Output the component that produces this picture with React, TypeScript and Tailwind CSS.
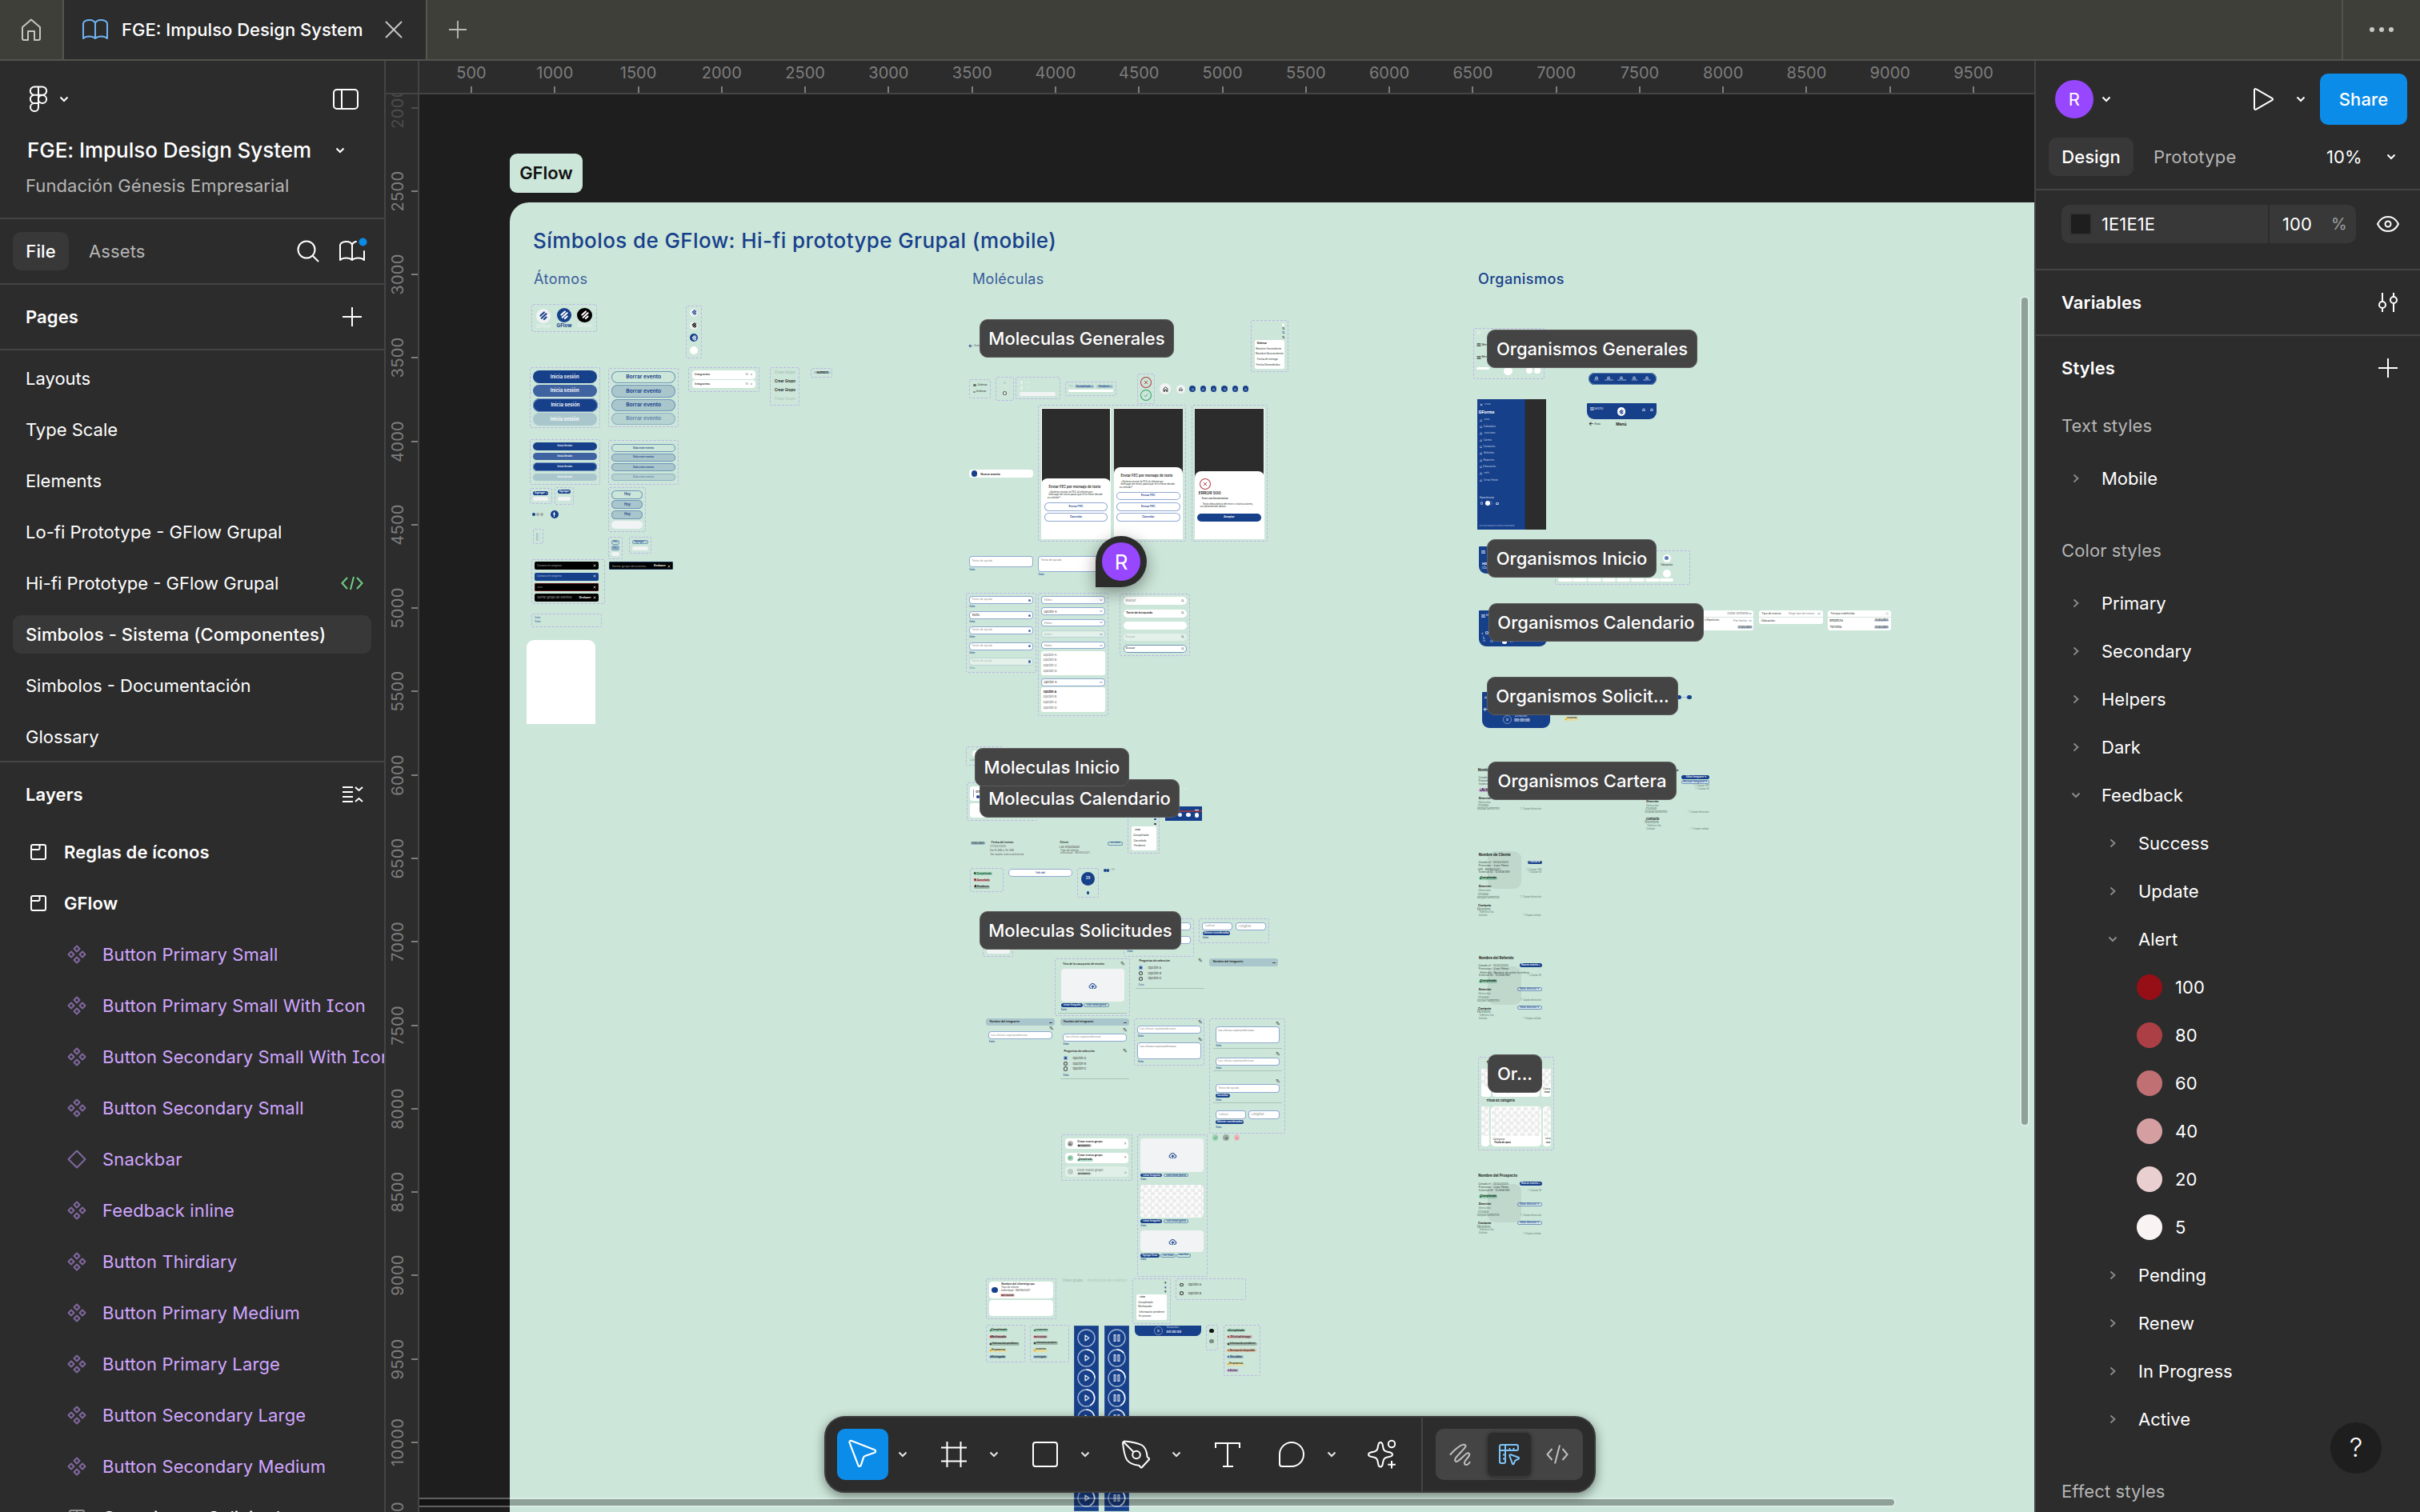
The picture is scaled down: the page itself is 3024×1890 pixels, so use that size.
import React from "react";

/* ---------- canvas miniatures ---------- */

type Item =
  | { k: "d"; x1: number; y1: number; x2: number; y2: number }
  | { k: "b"; x1: number; y1: number; x2: number; y2: number; f: string; r: number; s?: string }
  | { k: "c"; x: number; y: number; r: number; f: string; s?: string }
  | { k: "t"; x1: number; y: number; x2: number; v: string; f: string; w: number }
  | { k: "n"; x: number; y: number; w: number; h: number; n: React.ReactNode };

type Board = { ox: number; oy: number; sx: number; sy: number; items: Item[] };

const d = (x1: number, y1: number, x2: number, y2: number): Item => ({ k: "d", x1, y1, x2, y2 });
const b = (x1: number, y1: number, x2: number, y2: number, f: string, r = 0, s?: string): Item => ({ k: "b", x1, y1, x2, y2, f, r, s });
const c = (x: number, y: number, r: number, f: string, s?: string): Item => ({ k: "c", x, y, r, f, s });
const t = (x1: number, y: number, x2: number, v: string, f = "#3d4b45", w = 500): Item => ({ k: "t", x1, y, x2, v, f, w });
const n = (x: number, y: number, w: number, h: number, node: React.ReactNode): Item => ({ k: "n", x, y, w, h, n: node });

const BLUE = "#17408b";
const MID = "#3f63a1";
const PALE = "#a9c6cc";
const PALE2 = "#b6d2d1";
const OUT = "#6f97b8";
const LINE = "#8fa9cf";
const OFF = "#f1f3f4";
const GREY = "#8b8f8d";
const FAINT = "#e2f1e9";
const INK = "#1c2320";
const DARK = "#2c2c2c";
const RULE = "#a9c3b8";
const CHECKER = "repeating-conic-gradient(#ececec 0% 25%, #fbfbfb 0% 50%) 0 0 / 9px 9px";

function Mark({ fg }: { fg: string }) {
  return (
    <svg viewBox="0 0 20 20" className="h-full w-full" fill="none" stroke={fg} strokeWidth="2.4" strokeLinecap="round">
      <path d="M6 9.500l5-4.500M7.500 13l6.500-6M11 14.500l3-2.800" />
    </svg>
  );
}
function Cloud() {
  return (
    <svg viewBox="0 0 24 18" className="h-full w-full" fill="none" stroke="#17408b" strokeWidth="2.200" strokeLinecap="round" strokeLinejoin="round">
      <path d="M8 15H6a4 4 0 0 1-.6-7.900A6.500 6.500 0 0 1 18 7.200 4 4 0 0 1 18.500 15H16M12 16V8.500M9 11l3-3 3 3" />
    </svg>
  );
}
function Cross({ fg }: { fg: string }) {
  return (
    <svg viewBox="0 0 10 10" className="h-full w-full" fill="none" stroke={fg} strokeWidth="1.500">
      <path d="M1.500 1.500l7 7M8.500 1.500l-7 7" />
    </svg>
  );
}
function Tick({ fg }: { fg: string }) {
  return (
    <svg viewBox="0 0 10 10" className="h-full w-full" fill="none" stroke={fg} strokeWidth="1.500">
      <path d="M1.500 5.500l2.500 2.500 4.500-5.500" />
    </svg>
  );
}
function Vee({ fg, up }: { fg: string; up?: boolean }) {
  return (
    <svg viewBox="0 0 10 10" className="h-full w-full" fill="none" stroke={fg} strokeWidth="2">
      <path d={up ? "M1 7l4-4 4 4" : "M1 3l4 4 4-4"} />
    </svg>
  );
}
function Lens({ fg }: { fg: string }) {
  return (
    <svg viewBox="0 0 10 10" className="h-full w-full" fill="none" stroke={fg} strokeWidth="1.500">
      <circle cx="4" cy="4" r="2.800" />
      <path d="M6 6l3 3" />
    </svg>
  );
}
function Bars({ fg }: { fg: string }) {
  return (
    <svg viewBox="0 0 12 10" className="h-full w-full" fill="none" stroke={fg} strokeWidth="2">
      <path d="M0 1.500h12M0 5h12M0 8.500h12" />
    </svg>
  );
}
function House({ fg }: { fg: string }) {
  return (
    <svg viewBox="0 0 10 10" className="h-full w-full" fill="none" stroke={fg} strokeWidth="1.400">
      <path d="M1.500 9V4L5 1l3.500 3v5h-2V6h-3v3z" />
    </svg>
  );
}
function Play({ p }: { p: number }) {
  return (
    <svg viewBox="0 0 24 24" className="h-full w-full" fill="none">
      <circle cx="12" cy="12" r="11" stroke="#9fb3d3" strokeWidth="1.500" />
      <path d={p === 0 ? "M12 1h0" : p === 1 ? "M12 1a11 11 0 0 1 9 4.500" : p === 2 ? "M12 1a11 11 0 0 1 11 11" : "M12 1a11 11 0 0 1 5 20.500"} stroke="#fff" strokeWidth="1.600" />
      <path d="M10.500 8.500v7l5-3.500z" stroke="#dfe6f2" strokeWidth="1.400" strokeLinejoin="round" />
    </svg>
  );
}
function Pause({ p }: { p: number }) {
  return (
    <svg viewBox="0 0 24 24" className="h-full w-full" fill="none">
      <circle cx="12" cy="12" r="11" stroke="#9fb3d3" strokeWidth="1.500" />
      <path d={p === 0 ? "M12 1h0" : p === 1 ? "M12 1a11 11 0 0 1 9 4.500" : p === 2 ? "M12 1a11 11 0 0 1 11 11" : "M12 1a11 11 0 0 1 5 20.500"} stroke="#fff" strokeWidth="1.600" />
      <path d="M8.500 8v8h2V8zM13.500 8v8h2V8z" stroke="#cdd8ea" strokeWidth="1.200" />
    </svg>
  );
}

function pill(x1: number, y1: number, x2: number, y2: number, f: string, label: string, fg: string, tx1: number, tx2: number, s?: string, w = 600): Item[] {
  return [b(x1, y1, x2, y2, f, 20, s), t(tx1, (y1 + y2) / 2, tx2, label, fg, w)];
}
function field(x1: number, y1: number, x2: number, y2: number, label: string, lx2: number, fg = GREY, s: string | undefined = LINE, f = "#fff"): Item[] {
  return [b(x1, y1, x2, y2, f, 4, s), t(x1 + 10, (y1 + y2) / 2, lx2, label, fg, 400)];
}
const exito = (x: number, y: number): Item => t(x, y, x + 23, "Éxito", BLUE, 600);

const atoms: Board = {
  ox: 620, oy: 180, sx: 3, sy: 2.119,
  items: [
    d(132, 424, 377, 499),
    c(177, 455, 9.2, OFF), n(177, 455, 18, 18, <Mark fg={BLUE} />),
    c(255, 453, 9.2, BLUE), n(255, 453, 18, 18, <Mark fg="#fff" />),
    c(332, 453, 9.2, "#000"), n(332, 453, 18, 18, <Mark fg="#fff" />),
    t(152, 484, 202, "GFlow", FAINT, 700), t(230, 482, 280, "GFlow", BLUE, 700), t(307, 482, 356, "GFlow", FAINT, 700),
    d(711, 429, 770, 567),
    c(741, 447, 5, OFF), n(741, 447, 11, 11, <Mark fg={BLUE} />),
    c(741, 480, 5, OFF), n(741, 480, 11, 11, <Mark fg="#000" />),
    c(741, 513, 5, BLUE), n(741, 513, 11, 11, <Mark fg="#fff" />),
    c(741, 546, 5, "#fff"),
    d(127, 591, 389, 753),
    ...pill(138, 600, 377, 633, BLUE, "Inicia sesión", "#fff", 194, 320),
    ...pill(138, 637, 377, 669, MID, "Inicia sesión", "#fff", 194, 320),
    ...pill(139, 674, 380, 709, BLUE, "Inicia sesión", "#fff", 196, 323, "#6f8fbd"),
    ...pill(138, 713, 377, 745, PALE, "Inicia sesión", "#fff", 194, 320),
    d(421, 594, 683, 751),
    ...pill(432, 602, 672, 634, "transparent", "Borrar evento", BLUE, 482, 623, OUT),
    ...pill(432, 638, 672, 671, PALE, "Borrar evento", BLUE, 482, 623, OUT),
    ...pill(432, 675, 672, 707, PALE, "Borrar evento", BLUE, 482, 623, OUT),
    ...pill(432, 711, 672, 743, PALE2, "Borrar evento", "#5f86ab", 482, 623, "#8fb3c2"),
    d(721, 592, 986, 656),
    b(734, 600, 972, 622, "#fff", 4), t(743, 611, 803, "Integrantes", INK), t(934, 611, 945, "10", GREY), t(953, 611, 960, "›", INK),
    b(734, 626, 972, 647, "#fff", 4), t(743, 637, 803, "Integrantes", INK), t(934, 637, 945, "10", GREY), t(953, 637, 960, "›", INK),
    d(1027, 592, 1138, 692),
    t(1044, 607, 1122, "Crear Grupo", "#a9c2b5", 600), t(1044, 630, 1122, "Crear Grupo", "#111", 600),
    t(1044, 653, 1122, "Crear Grupo", "#111", 600), t(1044, 677, 1122, "Crear Grupo", "#b2cabd", 600),
    d(1180, 594, 1259, 618), ...pill(1191, 602, 1253, 609, PALE, "Nombre", INK, 1205, 1242),
    d(127, 782, 389, 903),
    ...pill(138, 791, 377, 811, BLUE, "Inicia Sesión", "#fff", 225, 290),
    ...pill(138, 817, 377, 837, MID, "Inicia Sesión", "#fff", 225, 290),
    ...pill(138, 843, 377, 867, BLUE, "Inicia Sesión", "#fff", 225, 290, "#6f8fbd"),
    ...pill(138, 873, 377, 893, PALE, "Inicia Sesión", "#fff", 225, 290),
    d(421, 785, 683, 902),
    ...pill(432, 795, 672, 816, "transparent", "Solo este evento", BLUE, 510, 594, OUT),
    ...pill(432, 820, 672, 841, PALE, "Solo este evento", BLUE, 510, 594, OUT),
    ...pill(432, 846, 672, 867, PALE, "Solo este evento", BLUE, 510, 594, OUT),
    ...pill(432, 872, 672, 893, PALE2, "Solo este evento", "#5f86ab", 510, 594, "#8fb3c2"),
    d(127, 911, 209, 954), ...pill(138, 920, 196, 931, BLUE, "Agregar +", "#fff", 144, 192), b(138, 935, 196, 946, OFF, 20),
    d(220, 908, 290, 955), ...pill(231, 915, 278, 927, BLUE, "Agregar", "#fff", 237, 273), b(231, 935, 278, 946, OFF, 20),
    c(140, 981, 2, BLUE), c(155, 981, 2, "#a3a8a5"), c(170, 981, 2, "#a3a8a5"),
    c(218, 981, 5, BLUE), b(213, 980, 223, 982, "#fff"), b(217, 975, 219, 987, "#fff"),
    d(421, 909, 562, 1028),
    ...pill(432, 918, 550, 940, "transparent", "Hoy", BLUE, 482, 502, OUT),
    ...pill(432, 944, 550, 966, PALE, "Hoy", BLUE, 482, 502, OUT),
    ...pill(432, 970, 550, 993, PALE, "Hoy", BLUE, 482, 502, OUT),
    b(432, 998, 550, 1019, OFF, 20),
    d(138, 1020, 176, 1060), b(150, 1029, 155, 1051, PALE), b(158, 1029, 163, 1051, "#bdd7d2"),
    d(421, 1041, 473, 1099),
    ...pill(433, 1049, 461, 1061, "transparent", "Hoy", BLUE, 440, 454, OUT),
    ...pill(433, 1064, 461, 1076, PALE, "Hoy", BLUE, 440, 454, OUT), b(433, 1080, 461, 1091, OFF, 20),
    d(499, 1041, 581, 1084), ...pill(510, 1049, 570, 1060, "transparent", "Agregar +", BLUE, 517, 564, OUT), b(510, 1065, 570, 1076, OFF, 20),
    d(132, 1099, 407, 1219),
    b(144, 1106, 383, 1127, "#000", 2), t(154, 1117, 245, "Contacto en progreso", "#999"), n(369, 1117, 4, 4, <Cross fg="#fff" />),
    b(144, 1135, 383, 1156, BLUE, 2), t(154, 1145, 245, "Contacto en progreso", "#9fb4dc"), n(369, 1145, 4, 4, <Cross fg="#fff" />),
    b(144, 1163, 383, 1184, "#000", 2, "#5a1015"), t(154, 1174, 174, "Error", "#999"), n(369, 1174, 4, 4, <Cross fg="#fff" />),
    b(144, 1191, 383, 1212, "#000", 2), t(154, 1202, 284, "Borrar grupo de eventos", "#999"), t(313, 1202, 354, "Deshacer", "#fff", 700), n(369, 1202, 4, 4, <Cross fg="#fff" />),
    b(424, 1107, 662, 1128, "#000", 2, "#23395f"), t(434, 1118, 563, "Borrar grupo de eventos", "#888"), t(593, 1118, 634, "Deshacer", "#fff", 700), n(648, 1118, 4, 4, <Cross fg="#fff" />),
    d(132, 1243, 395, 1279), t(144, 1255, 167, "Éxito", "#3f63a1", 600), t(144, 1267, 168, "Éxito", "#3f63a1", 600),
  ],
};

const optList = (x: number, ys: number[], firstBold: boolean): Item[] =>
  ys.map((y, i) => t(x, y, x + 48, "Opción " + "ABCD"[i], firstBold && i === 0 ? INK : "#555", firstBold && i === 0 ? 700 : 400));

const general: Board = {
  ox: 1200, oy: 380, sx: 3, sy: 2.904,
  items: [
    t(33, 152, 43, "←", BLUE, 700), t(51, 153, 73, "Atrás", "#667"),
    d(1090, 58, 1229, 248), b(1206, 70, 1216, 80, "#fff", 2), t(1208, 91, 1214, "⇅", INK), t(1208, 105, 1214, "⇅", BLUE), t(1208, 123, 1214, "⇅", INK),
    b(1103, 130, 1216, 235, "#fff", 2),
    t(1113, 144, 1148, "Ordenar", INK, 700), t(1113, 164, 1198, "Nombre Ascendente"), t(1113, 183, 1205, "Nombre Descendente"), t(1113, 202, 1189, "Fecha de entrega"), t(1113, 222, 1194, "Fecha Desembolso"),
    d(33, 273, 113, 342), n(55, 294, 4, 3, <Bars fg={INK} />), t(66, 294, 100, "Ordenar"), n(52, 318, 3, 2, <Bars fg={INK} />), t(60, 318, 96, "Ordenar"),
    d(132, 265, 200, 350), c(166, 286, 1.5, "#b8d0c5"), t(159, 299, 174, "Inicio", FAINT), c(166, 324, 2.5, "#fff", "#555"), t(159, 336, 174, "Inicio", FAINT),
    d(208, 265, 374, 345), b(225, 280, 234, 290, FAINT, 1), t(238, 285, 262, "Visita", FAINT), t(349, 285, 355, "›", FAINT), b(225, 300, 234, 310, FAINT, 1), t(238, 304, 262, "Visita", FAINT), t(349, 304, 355, "›", FAINT),
    b(222, 318, 357, 333, OFF, 2),
    d(393, 283, 584, 333), t(405, 300, 424, "Filtros", "#8ba89a"), ...pill(429, 294, 501, 306, PALE, "Completado ×", BLUE, 436, 496), ...pill(511, 294, 573, 306, PALE, "Pendiente ×", BLUE, 518, 567),
    b(405, 311, 573, 319, "#fff", 1),
    d(664, 254, 730, 362), c(697, 285, 7, "transparent", "#b03a43"), n(697, 285, 6, 6, <Cross fg="#b03a43" />), c(697, 330, 7, "transparent", "#35a06a"), n(697, 330, 6, 6, <Tick fg="#35a06a" />),
    c(769, 308, 7, OFF), n(769, 309, 7, 7, <House fg="#333" />), c(825, 308, 5.5, OFF), n(825, 308, 5, 5, <House fg="#333" />),
    ...[870, 910, 950, 990, 1030, 1070].flatMap((x): Item[] => [c(x, 308, 3.7, BLUE), n(x, 308, 3, 3, <House fg="#c6d3ea" />)]),
    d(292, 367, 847, 863),
    b(303, 378, 564, 853, "#fff"), b(305, 380, 562, 660, DARK), b(303, 632, 564, 853, "#fff", 8),
    b(575, 378, 835, 853, "#fff"), b(577, 380, 833, 620, DARK), b(575, 593, 835, 853, "#fff", 8),
    b(303, 800, 564, 853, "#fff"), b(575, 800, 835, 853, "#fff"),
    t(324, 664, 533, "Enviar FEC por mensaje de texto", INK, 600), t(324, 684, 505, "¿Quieres enviar la FEC al cliente por"), t(324, 694, 540, "mensaje de texto para que él lo llene desde"), t(324, 704, 377, "su celular?"),
    ...pill(315, 721, 552, 751, "#fff", "Enviar FEC", BLUE, 405, 461, LINE), ...pill(315, 759, 552, 789, "#fff", "Cancelar", BLUE, 411, 456, LINE),
    t(594, 625, 803, "Enviar FEC por mensaje de texto", INK, 600), t(594, 646, 770, "¿Quieres enviar la FEC al cliente por"), t(594, 656, 811, "mensaje de texto para que él lo llene desde"), t(594, 666, 648, "su celular?"),
    ...pill(585, 683, 824, 712, "#fff", "Enviar FEC", BLUE, 677, 732, LINE), ...pill(585, 721, 824, 751, "#fff", "Enviar FEC", BLUE, 677, 732, LINE), ...pill(585, 759, 824, 789, "#fff", "Cancelar", BLUE, 682, 727, LINE),
    d(867, 367, 1151, 863),
    b(879, 378, 1139, 853, "#fff"), b(879, 380, 1137, 640, DARK), b(879, 608, 1139, 853, "#fff", 8), b(879, 800, 1139, 853, "#fff"),
    c(917, 652, 7, "#fff", "#b03a43"), n(917, 652, 6, 6, <Cross fg="#b03a43" />),
    t(898, 688, 972, "ERROR 500", INK, 600), t(898, 706, 1011, "Error con los servicios", INK, 600), t(898, 728, 1107, "Texto descriptivo del error o instrucciones,"), t(898, 738, 998, "no obteniendo datos."),
    ...pill(888, 760, 1128, 790, BLUE, "Aceptar", "#fff", 987, 1028),
    b(33, 601, 272, 630, "#fff", 4), c(52, 616, 3.7, BLUE), t(77, 617, 148, "Nuevo evento", INK, 600),
    ...field(33, 916, 272, 954, "Texto de ayuda", 119), exito(33, 965),
    b(292, 916, 560, 974, "#fff", 4, LINE), t(302, 931, 378, "Texto de ayuda", GREY), exito(292, 983),
    d(22, 1047, 284, 1339),
    ...field(33, 1061, 272, 1089, "Texto de ayuda", 119), ...field(33, 1116, 272, 1145, "Texto", 72, INK), ...field(33, 1171, 272, 1200, "Texto de ayuda", 119), ...field(33, 1227, 272, 1256, "Texto de ayuda", 119), ...field(33, 1283, 272, 1312, "Texto de ayuda", 119, "#a9bdb3", "#b9d3d6", "#e3f1ea"),
    ...[1075, 1131, 1186, 1242, 1298].map((y): Item => c(259, y, 1.6, "#4a6cab")),
    exito(33, 1099), exito(33, 1155), exito(33, 1210), exito(33, 1266), t(33, 1322, 56, "Éxito", "#7296ad", 600),
    d(292, 1047, 554, 1497),
    ...field(304, 1061, 542, 1088, "Aldea", 342), ...field(304, 1102, 542, 1131, "Opción A", 360, INK), ...field(304, 1143, 542, 1171, "Aldea", 342),
    ...field(304, 1184, 542, 1212, "Aldea", 342, "#a9bdb3", "#b9d3d6", "#e3f1ea"), ...field(304, 1225, 542, 1253, "Aldea", 342),
    b(304, 1259, 542, 1347, "#fff", 3), ...optList(312, [1274, 1293, 1312, 1332], false),
    ...field(304, 1358, 542, 1387, "Opción A", 360, INK), b(304, 1392, 542, 1480, "#fff", 3), ...optList(312, [1407, 1426, 1446, 1465], true),
    ...[1075, 1116, 1157, 1198].map((y): Item => n(527, y, 4, 4, <Vee fg="#4a6cab" />)),
    ...[1240, 1373].map((y): Item => n(527, y, 4, 4, <Vee fg="#4a6cab" up />)),
    d(598, 1052, 862, 1279),
    b(611, 1064, 848, 1093, "#fff", 20), t(621, 1078, 656, "Buscar", GREY), b(611, 1108, 848, 1137, "#fff", 20), t(621, 1122, 720, "Texto de búsqueda", INK, 600), b(611, 1152, 848, 1181, "#fff", 20),
    b(611, 1196, 848, 1224, "#e3f1ea", 20), t(621, 1209, 654, "Buscar", "#a9bdb3"), b(611, 1238, 848, 1267, "#fff", 20, OUT), t(621, 1252, 654, "Buscar"),
    ...[1078, 1122, 1209, 1252].map((y): Item => n(833, y, 4, 4, <Lens fg="#666" />)),
  ],
};

const radios = (x: number, ys: number[]): Item[] =>
  ys.flatMap((y, i): Item[] => [c(x, y, 2.6, i === 0 ? BLUE : "transparent", i === 0 ? "#9fb8d6" : "#444"), t(x + 28, y, x + 75, "Opción " + "ABC"[i], "#555")]);
const ink = (x: number, y: number): Item => t(x - 4, y, x + 6, "✎", "#333");

const middle: Board = {
  ox: 1200, oy: 920, sx: 3, sy: 2.8,
  items: [
    d(22, 36, 158, 103), c(57, 62, 4, "#fff"), t(37, 86, 66, "Calend", "#8ba89a"),
    d(24, 163, 287, 296), b(37, 176, 200, 227, "#fff", 3), b(47, 188, 50, 217, "#7d99c9"), t(59, 195, 72, "07", INK, 700), c(66, 212, 2, BLUE), b(37, 234, 200, 285, "#fff", 3),
    t(815, 181, 850, "•• ⌄", "#e9f4ee"),
    d(628, 260, 746, 411), b(642, 315, 735, 400, "#fff", 2), t(652, 330, 678, "Filtrar", INK, 700), t(652, 348, 703, "Completado"), t(652, 367, 695, "Cancelado"), t(652, 386, 693, "Pendiente"),
    c(731, 291, 1.4, BLUE), c(731, 308, 1.2, "#333"),
    b(768, 247, 907, 296, BLUE), c(824, 275, 2.6, "#e8edf6"), c(855, 275, 2.6, "#fff"), c(886, 277, 2.8, "#fff"), b(878, 258, 895, 264, "#fff"), b(768, 260, 907, 266, "#8a3b4c"),
    ...pill(39, 370, 92, 381, "#9fbfc9", "21/03/2025", INK, 42, 89),
    t(114, 374, 201, "Fecha del evento", INK, 600), t(114, 388, 168, "27/03/2025", "#777"), t(114, 401, 198, "De 9 AM a 10 AM", "#777"), t(114, 415, 237, "Se repite mensualmente", "#777"),
    t(372, 375, 407, "Cliente", INK, 600), t(372, 390, 446, "Las Orquídeas", "#666"), t(372, 401, 446, "Tipo de cliente", "#666"), t(372, 412, 487, "Individual · 987654321", "#777"),
    ...pill(553, 370, 608, 383, "transparent", "Ver cliente", BLUE, 560, 602, OUT),
    d(37, 463, 161, 545),
    ...pill(50, 476, 119, 488, "#9ad0b2", "● Completado", "#0c4a2b", 53, 114), ...pill(50, 500, 112, 511, "#cfa8a8", "● Cancelado", "#7a1118", 53, 108), ...pill(50, 523, 110, 534, "#9fb5aa", "● Pendiente", "#111", 53, 106),
    ...pill(181, 465, 419, 492, "#fff", "Feliz día!", BLUE, 278, 323, LINE),
    d(439, 463, 518, 565), c(478, 500, 8.3, BLUE), t(472, 500, 486, "29", "#fff"), c(478, 549, 1.6, BLUE),
    c(543, 470, 1.8, BLUE), c(553, 470, 1.8, BLUE), t(562, 470, 577, "+10", "#7b9a8b"),
    d(85, 680, 197, 772), b(98, 720, 186, 762, OFF, 3),
    d(613, 639, 875, 772), b(625, 652, 863, 680, "#fff", 4, LINE), b(625, 699, 863, 727, "#fff", 4, LINE), exito(625, 755),
    d(895, 639, 1159, 724), ...field(907, 652, 1021, 680, "Latitud", 955), ...field(1033, 652, 1146, 680, "Longitud", 1089),
    ...pill(908, 684, 1011, 698, BLUE, "Obtener coordenadas", "#fff", 913, 1006), exito(908, 707),
    d(355, 779, 637, 981), t(377, 801, 549, "Foto de la casa punto de reunión", INK, 600), ink(609, 800), b(377, 815, 615, 931, OFF, 4), n(496, 875, 11, 9, <Cloud />),
    ...pill(377, 936, 459, 950, BLUE, "Tomar fotografía", "#fff", 383, 454), ...pill(463, 936, 557, 950, "transparent", "Subir desde galería", BLUE, 469, 551, OUT), exito(377, 960), b(366, 969, 623, 971, RULE),
    t(667, 788, 789, "Preguntas de selección", INK, 600), ink(898, 788), ...radios(677, [811, 830, 849]), t(667, 872, 690, "Éxito", "#3f63a1"), b(656, 882, 914, 884, RULE),
    b(933, 779, 1192, 806, PALE, 3), t(944, 793, 1063, "Nombre del integrante", INK, 600), b(1171, 793, 1181, 795, "#444"),
    b(96, 988, 354, 1015, PALE, 3), t(107, 1002, 225, "Nombre del integrante", INK, 600), b(334, 1001, 344, 1003, "#444"), ink(340, 1025),
    ...field(106, 1034, 344, 1062, "Las chicas superpoderosas", 250), exito(107, 1072),
    b(375, 988, 633, 1015, PALE, 3), t(384, 1002, 502, "Nombre del integrante", INK, 600), b(613, 1001, 623, 1003, "#444"), ink(618, 1032),
    ...field(385, 1042, 623, 1069, "Las chicas superpoderosas", 526), exito(385, 1080),
    t(385, 1105, 507, "Preguntas de selección", INK, 600), ink(617, 1105), ...radios(395, [1128, 1147, 1165]), exito(385, 1189), b(375, 1198, 633, 1200, RULE),
    d(652, 988, 916, 1155), ink(898, 1004), ...field(664, 1014, 902, 1042, "Las chicas superpoderosas", 807), exito(665, 1051), ink(898, 1066),
    b(664, 1073, 902, 1131, "#fff", 4, LINE), t(674, 1088, 807, "Las chicas superpoderosas", GREY), exito(665, 1140),
    d(934, 988, 1217, 1391), ink(1191, 1010), b(957, 1017, 1196, 1074, "#fff", 4, LINE), t(967, 1032, 1099, "Las chicas superpoderosas", GREY), exito(957, 1084), b(948, 1092, 1205, 1094, RULE),
    ink(1191, 1116), ...field(957, 1126, 1196, 1154, "Las chicas superpoderosas", 1099), exito(957, 1163), b(948, 1170, 1205, 1172, RULE),
    ink(1191, 1210), ...field(957, 1219, 1196, 1248, "Texto de ayuda", 1044), ...pill(957, 1252, 1010, 1266, BLUE, "Consultar", "#fff", 962, 1005), exito(957, 1276), b(948, 1282, 1205, 1284, RULE),
    ...field(957, 1311, 1072, 1340, "Latitud", 1005), ...field(1081, 1311, 1196, 1340, "Longitud", 1138), ...pill(957, 1345, 1061, 1359, BLUE, "Obtener coordenadas", "#fff", 963, 1056), exito(957, 1369),
  ],
};

const tag = (x: number, y: number, w: number, label: string, f: string, fg: string): Item[] => [
  b(x, y - 6, x + w, y + 6, f, 20), c(x + 6, y, 1, fg), t(x + 9, y, x + w - 5, label, "#1d2a24", 700),
];

const lower: Board = {
  ox: 1200, oy: 1400, sx: 3, sy: 3,
  items: [
    c(956, 66, 3.7, "#9ad0b2"), n(956, 66, 4, 4, <Tick fg="#0c6a3b" />), c(996, 66, 3.7, "#9aaaa2"), n(996, 66, 3, 3, <House fg="#333" />), c(1036, 66, 3.7, "#e9b9bd"), n(1036, 66, 3, 3, <Cross fg="#b01c26" />),
    d(379, 55, 644, 227),
    b(392, 69, 630, 108, "#fff", 4), c(412, 89, 3.6, "#b5b9b7"), n(412, 89, 4, 4, <House fg="#333" />), t(438, 82, 534, "Crear nuevo grupo", INK, 600), ...tag(438, 97, 53, "Pendiente", "#c9c9c9", "#111"),
    b(392, 122, 630, 161, "#fff", 4), c(412, 142, 3.6, "#9ad0b2"), n(412, 142, 4, 4, <Tick fg="#0c6a3b" />), t(438, 135, 534, "Crear nuevo grupo", INK, 600), ...tag(438, 149, 59, "Completado", "#b8e2ca", "#0c7a43"),
    b(392, 175, 630, 214, "#e0efe7", 4), c(412, 194, 3.6, "#bccbc3"), t(438, 188, 534, "Crear nuevo grupo", "#74877d", 500), ...tag(438, 202, 53, "Pendiente", "#cbd8d0", "#555"),
    t(614, 89, 622, "›", INK), t(614, 141, 622, "›", INK), n(620, 195, 3, 3, <House fg="#999" />),
    d(662, 55, 926, 587),
    b(675, 69, 912, 194, OFF, 4), n(795, 133, 11, 9, <Cloud />), ...pill(675, 200, 757, 214, BLUE, "Tomar fotografía", "#fff", 681, 752), ...pill(762, 200, 855, 214, "transparent", "Subir desde galería", BLUE, 768, 849, OUT), exito(675, 224),
    b(675, 243, 912, 367, CHECKER, 4), ...pill(675, 373, 757, 387, BLUE, "Tomar fotografía", "#fff", 681, 752), ...pill(762, 373, 855, 387, "transparent", "Subir desde galería", BLUE, 768, 849, OUT), exito(675, 397),
    b(675, 415, 912, 494, OFF, 4), n(795, 456, 11, 9, <Cloud />), ...pill(675, 500, 746, 515, BLUE, "Agregar firma", "#fff", 681, 740), ...pill(750, 500, 806, 515, "transparent", "Leer firma", BLUE, 757, 800, OUT), ...pill(810, 500, 863, 515, "transparent", "Subir foto", BLUE, 816, 857, OUT), exito(675, 524),
    d(97, 595, 360, 746), b(109, 606, 348, 668, "#fff", 4), c(129, 637, 3.6, BLUE), t(150, 618, 282, "Nombre del cliente/grupo", INK, 600), t(150, 630, 222, "Tipo de cliente", "#555"), t(150, 642, 264, "Individual · 987654321", "#555"), ...tag(150, 657, 53, "Rechazado", "#e8b9bd", "#b01c26"),
    b(109, 674, 348, 735, "#fff", 4),
    t(382, 605, 460, "Crear grupo", "#a3bdb0", 600), t(473, 605, 627, "Aceptación de condicio", "#b5cec1", 600),
    d(646, 595, 788, 764), t(765, 612, 773, "▾", "#333"), t(765, 628, 773, "▾", BLUE), t(765, 645, 773, "▾", "#333"),
    b(660, 653, 774, 750, "#fff", 2), t(670, 667, 696, "Filtrar", INK, 700), t(670, 685, 719, "Completado"), t(670, 702, 715, "Rechazado"), t(670, 720, 765, "Información pendiente"), t(670, 737, 714, "En proceso"),
    d(806, 595, 1070, 674), c(829, 618, 2.4, "transparent", "#333"), t(856, 618, 902, "Opción A", "#444"), c(829, 650, 2.4, "transparent", "#333"), t(856, 650, 902, "Opción B", "#444"),
    d(97, 769, 242, 908), ...tag(109, 789, 69, "Completado", "#a5d6bb", "#0c7a43"), ...tag(109, 814, 65, "Rechazado", "#d3abaf", "#b01c26"), ...tag(109, 839, 114, "Información pendiente", "#9fb5aa", "#111"), ...tag(109, 864, 64, "En proceso", "#e6dca0", "#d8a100"), ...tag(109, 889, 63, "Entregado", "#9fc0d0", "#1f5fc4"),
    d(261, 769, 407, 908), ...tag(274, 788, 56, "Completado", "#a5d6bb", "#0c7a43"), ...tag(274, 813, 52, "Rechazado", "#d3abaf", "#b01c26"), ...tag(274, 838, 93, "Información pendiente", "#9fb5aa", "#111"), ...tag(274, 863, 52, "En proceso", "#e6dca0", "#d8a100"), ...tag(274, 888, 52, "Entregado", "#9fc0d0", "#1f5fc4"),
    b(426, 770, 520, 1466, BLUE, 0, "#33569a"), b(540, 770, 634, 1466, BLUE, 0, "#33569a"),
    ...[816, 891, 967, 1042, 1117, 1192, 1267, 1342, 1417].flatMap((y, i): Item[] => [
      n(473, y, 23, 23, <Play p={Math.min(i, 3)} />),
      n(587, y, 23, 23, <Pause p={Math.min(i, 3)} />),
    ]),
    b(654, 770, 902, 790, BLUE), b(654, 770, 902, 810, BLUE, 8), n(743, 790, 11, 11, <Play p={0} />), t(774, 780, 821, "Duración:", "#b4c4df"), t(774, 795, 827, "00:00:00", "#fff", 600),
    d(922, 769, 967, 863), c(942, 790, 2.8, "#111"), c(942, 830, 2.8, "#7d8d85"),
    d(988, 769, 1125, 959), ...tag(1000, 790, 68, "Completado", "#a5d6bb", "#0c7a43"), ...tag(1000, 814, 96, "Dificultad de pago", "#d3abaf", "#b01c26"), ...tag(1000, 839, 113, "Información pendiente", "#9fb5aa", "#111"), ...tag(1000, 864, 110, "Renovación disponible", "#e0b9a0", "#c4581f"), ...tag(1000, 889, 63, "Sin saldos", "#9fc0d0", "#1f5fc4"), ...tag(1000, 914, 64, "En proceso", "#e6dca0", "#d8a100"), ...tag(1000, 939, 43, "Activo", "#c8b4d4", "#7b2fa8"),
  ],
};

const menu: [number, string, number][] = [
  [407, "Inicio", 117], [430, "Calendario", 137], [453, "Solicitudes", 137], [477, "Cartera", 123], [500, "Contactos", 134], [523, "Referidos", 132], [547, "Reportes", 131], [570, "Educación", 136], [593, "Perfil", 116], [617, "Cerrar Sesión", 146],
];

const organisms: Board = {
  ox: 1820, oy: 380, sx: 2.8, sy: 2.8,
  items: [
    d(60, 85, 307, 262), n(79, 101, 6, 4, <Bars fg="#e9f4ee" />), n(79, 143, 6, 4, <Bars fg="#333" />), t(92, 144, 110, "Menú", "#333"), n(78, 187, 6, 4, <Bars fg="#333" />), t(91, 187, 110, "Menú", "#333"),
    b(70, 221, 115, 231, "#fff", 3), c(180, 235, 5.3, "#fff"), c(255, 232, 4, "#fff"), c(284, 232, 4, "#fff"),
    b(462, 242, 699, 283, BLUE, 10, "#5b81ad"),
    ...([[489, "Inicio"], [533, "Calendario"], [578, "Solicitudes"], [622, "Cartera"], [666, "Reportes"]] as [number, string][]).flatMap(([x, v]): Item[] => [n(x, 258, 4, 4, <House fg="#fff" />), t(x - v.length * 1.5, 270, x + v.length * 1.5, v, "#b4c4df")]),
    b(457, 348, 699, 375, BLUE, 1), b(457, 348, 699, 403, BLUE, 9), n(474, 367, 5, 4, <Bars fg="#dfe6f2" />), t(487, 368, 510, "Menú", "#b4c4df"), c(577, 377, 5.2, "#fff"), n(577, 377, 10, 10, <Mark fg={BLUE} />), n(654, 370, 4, 4, <House fg="#fff" />), n(682, 370, 4, 4, <House fg="#fff" />),
    t(466, 422, 476, "←", INK, 700), t(482, 422, 504, "Atrás"), t(562, 421, 591, "Menú", INK, 700),
    b(72, 334, 314, 790, DARK), b(72, 334, 241, 790, BLUE), b(238, 334, 242, 790, "#173468"),
    n(87, 354, 4, 4, <Cross fg="#fff" />), t(98, 354, 120, "Cerrar", "#9db1d4"), t(81, 381, 129, "GForms", "#fff", 700),
    ...menu.flatMap(([y, v, x2]): Item[] => [n(86, y, 3.5, 3.5, <House fg="#c6d3ea" />), t(95, y, x2, v, "#b4c4df")]),
    t(81, 681, 131, "Apariencia", "#c6d3ea"), c(88, 698, 1.8, "transparent", "#9db1d4"), b(101, 690, 129, 706, "#2b5197", 10), c(110, 698, 3, "#fff"), c(142, 699, 1.8, "transparent", "#c6d3ea"),
    t(81, 778, 201, "2025 © Fundación Génesis Empresarial", "#8fa5cc"),
    b(77, 848, 200, 890, BLUE, 1), b(77, 848, 316, 943, BLUE, 9), n(94, 867, 5, 4, <Bars fg="#dfe6f2" />), t(89, 909, 120, "Hola,", "#fff", 700), t(89, 924, 115, "¡Qué", "#b4c4df"),
    d(344, 863, 819, 982), c(736, 889, 5, "#fff"), c(736, 889, 2.4, "#5b7bb5"), t(717, 913, 755, "Educación", "#333"), c(736, 943, 5, "#fff"),
    ...[356, 407, 458, 509, 559, 610, 661, 711].map((x): Item => b(x, 960, x + 49, 971, "#fff", 2)),
    b(77, 1073, 200, 1120, BLUE, 1), b(77, 1073, 316, 1198, BLUE, 9), n(94, 1092, 5, 4, <Bars fg="#dfe6f2" />), t(106, 1092, 125, "Menú", "#b4c4df"), t(87, 1152, 94, "‹", "#fff"), c(105, 1152, 2, "transparent", "#c6d3ea"), t(93, 1168, 100, "L", "#c6d3ea"), t(93, 1182, 100, "24", "#c6d3ea"), c(168, 1184, 2.6, "#fff"), t(118, 1182, 127, "25", "#c6d3ea"), t(188, 1182, 196, "28", "#c6d3ea"),
    b(800, 1073, 1040, 1142, "#fff", 3), t(952, 1085, 1016, "Cada semana", GREY), n(1028, 1084, 4, 4, <Vee fg="#4a6cab" />), b(800, 1095, 1040, 1097, "#d8e6df"), t(866, 1108, 921, "n Repetición"), t(969, 1108, 1016, "Por fecha", GREY), n(1028, 1108, 4, 4, <Vee fg="#4a6cab" />), ...pill(983, 1126, 1036, 1137, "#c2cfe0", "27/03/2025", INK, 987, 1031),
    b(1057, 1073, 1281, 1119, "#fff", 3), t(1067, 1085, 1136, "Tipo de evento"), t(1158, 1085, 1257, "Elegir tipo de evento", GREY), n(1268, 1084, 4, 4, <Vee fg="#4a6cab" />), b(1057, 1095, 1281, 1097, "#d8e6df"), t(1067, 1108, 1114, "Ubicación"),
    b(1298, 1073, 1520, 1142, "#fff", 3), t(1308, 1085, 1393, "Tiempo indefinido"), b(1492, 1079, 1512, 1090, "#e4e4e4", 10), c(1498, 1084, 1.8, "#fff"), b(1298, 1095, 1520, 1097, "#d8e6df"), t(1308, 1108, 1349, "Empieza"), ...pill(1462, 1102, 1513, 1113, "#c2cfe0", "27/03/2025", INK, 1466, 1509), t(1308, 1131, 1346, "Termina"), ...pill(1462, 1126, 1513, 1137, "#c2cfe0", "27/03/2025", INK, 1466, 1509),
    b(90, 1359, 220, 1420, BLUE, 1), b(90, 1359, 329, 1483, BLUE, 9), n(101, 1378, 3, 4, <Bars fg="#dfe6f2" />), t(97, 1419, 107, "←", "#fff"), n(177, 1454, 11, 11, <Play p={0} />), t(204, 1445, 249, "Duración:", "#b4c4df"), t(204, 1459, 255, "00:00:00", "#fff", 600),
    ...tag(378, 1452, 48, "En proceso", "#e6dca0", "#d8b100"),
    c(779, 1376, 2.8, BLUE), b(789, 1375, 806, 1378, "#9fb8d6"), c(815, 1376, 2.8, BLUE),
  ],
};

function person(y: number, title: string, w: number, ref: boolean, client: boolean): Item[] {
  const k = ref ? 9 : client ? 9 : 0;
  return [
    t(82, y, 82 + w, title, INK, 700),
    t(82, y + 24, 195, "Creado el · 24/03/2025", "#4d6358"), t(82, y + 34, 197, "Promotor · Juan Pérez", "#4d6358"),
    ...(ref ? [t(82, y + 44, 279, "Referido · Nombre de quien lo refiere", "#4d6358")] : []),
    ...(client ? [t(82, y + 44, 163, "DPI · 987654321", "#4d6358"), t(262, y + 44, 318, "❐ Copiar DPI", "#6e8a7c")] : []),
    t(82, y + 44 + k, 201, "External ID · 123456789", "#4d6358"), t(266, y + 44 + k, 318, "❐ Copiar ID", "#6e8a7c"),
    ...tag(83, y + 61 + k, 69, "Completado", "#93cdae", "#0c7a43"),
    t(82, y + 87 + k, 131, "Dirección", INK, 700), t(82, y + 99 + k, 129, "Dirección", "#6e8a7c"), t(82, y + 109 + k, 118, "Ciudad", "#6e8a7c"), t(82, y + 119 + k, 157, "Departamento", "#6e8a7c"), t(238, y + 119 + k, 318, "❐ Copiar dirección", "#6e8a7c"),
    t(82, y + 143 + k, 129, "Contacto", INK, 700), t(82, y + 156 + k, 123, "Nombre", "#6e8a7c"), t(82, y + 165 + k, 143, "Teléfono fijo", "#6e8a7c"), t(82, y + 175 + k, 117, "Celular", "#6e8a7c"), t(247, y + 175 + k, 318, "❐ Copiar celular", "#6e8a7c"),
    ...(client
      ? pill(267, y + 15, 320, y + 27, BLUE, "Llamar ✆", "#fff", 273, 316)
      : [
          ...pill(237, y + 15, 320, y + 27, BLUE, "Nuevo evento +", "#fff", 243, 315),
          ...pill(229, y + 79 + k, 320, y + 91 + k, "#dcebf0", "Editar dirección ✎", BLUE, 234, 315, OUT),
          ...pill(229, y + 135 + k, 320, y + 147 + k, "#dcebf0", "Editar dirección ✎", BLUE, 234, 315, OUT),
        ]),
  ];
}

const cards: Board = {
  ox: 1820, oy: 940, sx: 3, sy: 2.45,
  items: [
    t(82, 57, 190, "Nombre del Grupo", INK, 700), t(82, 80, 190, "Creado el · 24/03/2025", "#4d6358"), t(82, 90, 190, "Promotor · Juan Pérez", "#4d6358"), t(82, 100, 190, "External ID · 1234567", "#4d6358"), ...tag(83, 117, 57, "Activo", "#c3aad4", "#7b2fa8"),
    t(82, 143, 131, "Dirección", INK, 700), t(82, 155, 129, "Dirección", "#6e8a7c"), t(82, 165, 118, "Ciudad", "#6e8a7c"), t(82, 175, 157, "Departamento", "#6e8a7c"), t(238, 175, 318, "❐ Copiar dirección", "#6e8a7c"),
    t(815, 57, 832, "nte", INK, 700), ...pill(843, 71, 948, 83, BLUE, "Editar Integrante ✎", "#fff", 857, 942), ...pill(843, 86, 948, 97, "#dcebf0", "Renovar Integrante ⟳", BLUE, 848, 944, OUT), t(889, 104, 947, "❐ Copiar DPI", "#6e8a7c"), t(895, 114, 947, "❐ Copiar ID", "#6e8a7c"),
    t(711, 154, 759, "Dirección", INK, 700), t(711, 165, 759, "Dirección", "#6e8a7c"), t(711, 175, 748, "Ciudad", "#6e8a7c"), t(711, 185, 786, "Departamento", "#6e8a7c"), t(867, 185, 947, "❐ Copiar dirección", "#6e8a7c"),
    t(711, 205, 759, "Contacto", INK, 700), t(711, 217, 753, "Nombre", "#6e8a7c"), t(711, 227, 771, "Teléfono fijo", "#6e8a7c"), t(711, 237, 745, "Celular", "#6e8a7c"), t(876, 237, 947, "❐ Copiar celular", "#6e8a7c"),
    ...person(317, "Nombre de Cliente", 122, false, true), b(118, 304, 243, 420, "#0000000f", 9),
    ...person(633, "Nombre del Referido", 134, true, false), b(118, 657, 243, 773, "#0000000f", 9),
    ...person(1300, "Nombre del Prospecto", 146, false, false), b(118, 1324, 243, 1441, "#0000000f", 9),
    d(82, 934, 365, 1219), t(105, 951, 225, "Título de categoría", INK, 700),
    b(94, 969, 129, 1055, "#fff", 3), b(94, 969, 129, 1024, CHECKER), b(136, 969, 312, 1055, "#fff", 4), b(319, 969, 353, 1055, "#fff", 3), b(319, 969, 353, 1024, CHECKER), t(326, 1034, 350, "Categ", "#555"), t(326, 1043, 352, "Título", INK, 700), t(143, 1043, 214, "Título de post", INK, 700),
    t(105, 1067, 225, "Título de categoría", INK, 700),
    b(94, 1086, 123, 1208, "#fff", 4), b(94, 1086, 123, 1177, CHECKER), b(129, 1086, 318, 1208, "#fff", 5), b(131, 1088, 316, 1177, CHECKER, 2), b(324, 1086, 353, 1208, "#fff", 4), b(326, 1088, 353, 1177, CHECKER),
    t(137, 1187, 180, "Categoría", "#555"), t(137, 1196, 208, "Título de post", INK, 700), t(333, 1187, 352, "Categ", "#555"), t(333, 1196, 353, "Título", INK, 700),
  ],
};

function MiniBoard({ board }: { board: Board }) {
  const X = (v: number) => board.ox - 524 + v / board.sx;
  const Y = (v: number) => board.oy - 118 + v / board.sy;
  return (
    <>
      {board.items.map((i, key) => {
        if (i.k === "d")
          return <div key={key} className="absolute rounded-[2px] border border-dashed border-[#bdb6e6]" style={{ left: X(i.x1), top: Y(i.y1), width: X(i.x2) - X(i.x1), height: Y(i.y2) - Y(i.y1) }} />;
        if (i.k === "b")
          return <div key={key} className="absolute" style={{ left: X(i.x1), top: Y(i.y1), width: X(i.x2) - X(i.x1), height: Y(i.y2) - Y(i.y1), background: i.f, borderRadius: i.r, boxShadow: i.s ? `inset 0 0 0 1px ${i.s}` : undefined }} />;
        if (i.k === "c")
          return <div key={key} className="absolute rounded-full" style={{ left: X(i.x) - i.r, top: Y(i.y) - i.r, width: i.r * 2, height: i.r * 2, background: i.f, boxShadow: i.s ? `inset 0 0 0 1px ${i.s}` : undefined }} />;
        if (i.k === "n")
          return <div key={key} className="absolute flex" style={{ left: X(i.x) - i.w / 2, top: Y(i.y) - i.h / 2, width: i.w, height: i.h }}>{i.n}</div>;
        const w = X(i.x2) - X(i.x1);
        const size = w / (i.v.length * (i.w >= 600 ? 0.54 : 0.51));
        return (
          <div key={key} className="absolute flex h-[14px] items-center justify-center leading-none whitespace-pre" style={{ left: X(i.x1), top: Y(i.y) - 7, width: w, fontSize: size, color: i.f, fontWeight: i.w }}>
            {i.v}
          </div>
        );
      })}
    </>
  );
}

const labels: { x: number; y: number; w: number; v: string }[] = [
  { x: 1224, y: 399, w: 243, v: "Moleculas Generales" },
  { x: 1224, y: 974, w: 250, v: "Moleculas Calendario" },
  { x: 1218, y: 935, w: 193, v: "Moleculas Inicio" },
  { x: 1224, y: 1139, w: 252, v: "Moleculas Solicitudes" },
  { x: 1858, y: 412, w: 263, v: "Organismos Generales" },
  { x: 1858, y: 674, w: 212, v: "Organismos Inicio" },
  { x: 1860, y: 754, w: 269, v: "Organismos Calendario" },
  { x: 1858, y: 846, w: 239, v: "Organismos Solicit..." },
  { x: 1859, y: 952, w: 236, v: "Organismos Cartera" },
  { x: 1859, y: 1318, w: 68, v: "Or..." },
];

function Canvas() {
  return (
    <div className="relative min-h-0 flex-1 overflow-hidden bg-[#1e1e1e]">
      <div className="absolute top-[74px] left-[113px] flex h-[49px] w-[91px] items-center justify-center rounded-[9px] bg-[#cce6d9] text-[22px] font-[600] text-[#111]">GFlow</div>
      <div className="absolute top-[135px] left-[113px] h-[1700px] w-[2000px] rounded-tl-[24px] bg-[#cce6d9]" />
      <div className="absolute top-[166px] left-[142px] text-[26px] leading-[34px] font-[450] tracking-[0.4px] whitespace-nowrap text-[#17408b]">Símbolos de GFlow: Hi-fi prototype Grupal (mobile)</div>
      <div className="absolute top-[219px] left-[143px] text-[18px] leading-[24px] tracking-[0.45px] text-[#3a5c9c]">Átomos</div>
      <div className="absolute top-[219px] left-[691px] text-[18px] leading-[24px] tracking-[0.3px] text-[#3a5c9c]">Moléculas</div>
      <div className="absolute top-[219px] left-[1323px] text-[18px] leading-[24px] font-medium tracking-[0.45px] text-[#17408b]">Organismos</div>
      <div className="absolute top-[682px] left-[134px] h-[105px] w-[86px] rounded-t-[9px] bg-white" />
      <MiniBoard board={atoms} />
      <MiniBoard board={general} />
      <MiniBoard board={middle} />
      <MiniBoard board={lower} />
      <MiniBoard board={organisms} />
      <MiniBoard board={cards} />
      {labels.map((l) => (
        <div key={l.v} className="absolute flex h-[48px] items-center justify-center rounded-[10px] border border-[#5c5c5c] bg-[#444] text-[22px] font-medium whitespace-nowrap text-white" style={{ left: l.x - 524, top: l.y - 118, width: l.w }}>
          {l.v}
        </div>
      ))}
      <div className="absolute top-[552px] left-[845px] flex size-[64px] items-center justify-center rounded-full rounded-bl-[2px] bg-[#2c2c2c] shadow-[0_6px_20px_rgba(0,0,0,0.4)]">
        <div className="flex size-[48px] items-center justify-center rounded-full bg-[#9747ff] text-[26px] text-white">R</div>
      </div>
      <div className="absolute top-[254px] right-[8px] h-[1034px] w-[8px] rounded-full bg-black/30 shadow-[0_0_0_2px_rgba(255,255,255,0.3)]" />
      <div className="absolute top-[1756px] left-[0px] h-[8px] w-[1843px] rounded-r-full bg-black/30 shadow-[0_0_0_2px_rgba(255,255,255,0.3)]" />
    </div>
  );
}

/* ---------- shared icons ---------- */

function Chevron({ color = "#ffffff" }: { color?: string }) {
  return (
    <svg width="12" height="8" viewBox="0 0 12 8" fill="none" stroke={color} strokeWidth="2" className="shrink-0">
      <path d="M1.500 1.500L6 6l4.500-4.500" />
    </svg>
  );
}
function ChevronRight() {
  return (
    <svg width="8" height="12" viewBox="0 0 8 12" fill="none" stroke="#8c8c8c" strokeWidth="1.800">
      <path d="M1.500 1.500L6.500 6l-5 4.500" />
    </svg>
  );
}
function Plus({ s = 24, color = "#fff" }: { s?: number; color?: string }) {
  return (
    <svg width={s} height={s} viewBox="0 0 24 24" stroke={color} strokeWidth="2" className="shrink-0">
      <path d="M12 0v24M0 12h24" />
    </svg>
  );
}
function Book({ color, dot }: { color: string; dot?: boolean }) {
  return (
    <svg width="32" height="28" viewBox="0 0 32 28" fill="none" stroke={color} strokeWidth="2" strokeLinejoin="round" strokeLinecap="round" className="shrink-0 overflow-visible">
      {dot ? (
        <>
          <path d="M16 25V6c-1-2.500-3.500-4-7-4S2 3.500 1 6v19c1.500-1.500 4-2.500 7.500-2.500S14.500 23.500 16 25c1.500-1.500 4-2.500 7.500-2.500S29.500 23.500 31 25V14M16 6c.8-2 2.500-3.500 5-3.900" />
          <circle cx="29.500" cy="2.500" r="5" fill="#0c8ce9" stroke="none" />
        </>
      ) : (
        <path d="M16 25V6c-1-2.500-3.500-4-7-4S2 3.500 1 6v19c1.500-1.500 4-2.500 7.500-2.500S14.500 23.500 16 25c1.500-1.500 4-2.500 7.500-2.500S29.500 23.500 31 25V6c-1-2.500-4.500-4-8-4s-6 1.500-7 4" />
      )}
    </svg>
  );
}

/* ---------- tab bar ---------- */

function TabBar() {
  return (
    <div className="flex h-[76px] shrink-0 border-b-2 border-[#52534d] bg-[#3f3f39]">
      <div className="flex w-[80px] items-center justify-center border-r-2 border-[#55564f] pr-px">
        <svg width="26" height="28" viewBox="0 0 26 28" fill="none" stroke="#c5c5c3" strokeWidth="2" strokeLinejoin="round">
          <path d="M2 11L13 1.500 24 11v14a2 2 0 0 1-2 2h-5V16h-8v11H4a2 2 0 0 1-2-2z" />
        </svg>
      </div>
      <div className="flex w-[454px] items-center border-r-2 border-[#55564f] bg-[#2c2c2c] pl-[23px]">
        <Book color="#6fb3f2" />
        <span className="ml-[17px] w-[299px] pt-px text-[22px] font-[550] whitespace-nowrap text-white">FGE: Impulso Design System</span>
        <svg width="22" height="22" viewBox="0 0 22 22" stroke="#c4c4c4" strokeWidth="2" className="ml-[30px]">
          <path d="M1 1l20 20M21 1L1 21" />
        </svg>
      </div>
      <div className="flex flex-1 items-center pl-[27px]">
        <Plus s={22} color="#b9b9b6" />
      </div>
      <div className="flex w-[98px] items-center justify-center gap-[6px] border-l-2 border-[#52534d]">
        <div className="size-[6px] rounded-full bg-[#c8c8c6]" />
        <div className="size-[6px] rounded-full bg-[#c8c8c6]" />
        <div className="size-[6px] rounded-full bg-[#c8c8c6]" />
      </div>
    </div>
  );
}

/* ---------- left sidebar ---------- */

const pages = ["Layouts", "Type Scale", "Elements", "Lo-fi Prototype - GFlow Grupal", "Hi-fi Prototype - GFlow Grupal", "Simbolos - Sistema (Componentes)", "Simbolos - Documentación", "Glossary"];
const layers = ["Button Primary Small", "Button Primary Small With Icon", "Button Secondary Small With Icon", "Button Secondary Small", "Snackbar", "Feedback inline", "Button Thirdiary", "Button Primary Medium", "Button Primary Large", "Button Secondary Large", "Button Secondary Medium"];

function SectionIcon() {
  return (
    <svg width="20" height="20" viewBox="0 0 20 20" fill="none" stroke="#fff" strokeWidth="2" className="shrink-0">
      <rect x="1" y="1" width="18" height="18" rx="2" />
      <path d="M1 7h9a1.500 1.500 0 0 0 1.500-1.500V1" />
    </svg>
  );
}
function ComponentIcon() {
  return (
    <svg width="24" height="24" viewBox="0 0 24 24" fill="none" stroke="#8068a0" strokeWidth="2" strokeLinejoin="round" className="shrink-0">
      <path d="M12 1.500L15.500 5 12 8.500 8.500 5zM12 15.500l3.500 3.500-3.500 3.500L8.500 19zM5 8.500L8.500 12 5 15.500 1.500 12zM19 8.500l3.500 3.500-3.500 3.500-3.500-3.500z" />
    </svg>
  );
}
function VariantIcon() {
  return (
    <svg width="24" height="24" viewBox="0 0 24 24" fill="none" stroke="#8068a0" strokeWidth="2" strokeLinejoin="round" className="shrink-0">
      <path d="M12 1.500L22.500 12 12 22.500 1.500 12z" />
    </svg>
  );
}

function LeftSidebar() {
  return (
    <div className="flex w-[482px] shrink-0 flex-col overflow-hidden border-r-2 border-[#444] bg-[#2c2c2c] text-[22px] tracking-[0.1px] text-white">
      <div className="flex h-[198px] shrink-0 flex-col border-b-2 border-[#444] pt-[24px]">
        <div className="flex h-[48px] items-center pr-[32px] pl-[36px]">
          <svg width="24" height="34" viewBox="0 0 24 34" fill="none" stroke="#fff" strokeWidth="2">
            <path d="M12 1.500H7a5 5 0 0 0 0 10.300h5zM12 1.500h5a5 5 0 0 1 0 10.300h-5zM12 11.800H7a5 5 0 0 0 0 10.300h5zM12 22.100H7a5 5 0 1 0 5 5.100z" />
            <circle cx="17" cy="17" r="5.100" />
          </svg>
          <div className="flex-1 pl-[14px]"><Chevron /></div>
          <svg width="32" height="26" viewBox="0 0 32 26" fill="none" stroke="#fff" strokeWidth="2">
            <rect x="1" y="1" width="30" height="24" rx="4" />
            <path d="M11 1v24" />
          </svg>
        </div>
        <div className="mt-[24px] flex h-[32px] items-center pl-[34px] text-[26px] leading-[32px] font-[550] tracking-[-0.05px]">
          <span className="w-[385px] whitespace-nowrap">FGE: Impulso Design System</span>
          <Chevron />
        </div>
        <div className="mt-[13px] pl-[32px] leading-[30px] text-[#b5b5b5]">Fundación Génesis Empresarial</div>
      </div>
      <div className="flex h-[82px] shrink-0 items-center border-b-2 border-[#444] pr-[24px] pl-[16px]">
        <div className="flex h-[48px] w-[70px] items-center justify-center rounded-[10px] bg-[#383838] font-[550]">File</div>
        <span className="flex-1 pl-[25px] text-[#b5b5b5]">Assets</span>
        <svg width="28" height="28" viewBox="0 0 28 28" fill="none" stroke="#fff" strokeWidth="2" className="mr-[25px]">
          <circle cx="12" cy="12" r="10.500" />
          <path d="M19.500 19.500L27 27" />
        </svg>
        <Book color="#fff" dot />
      </div>
      <div className="flex h-[82px] shrink-0 items-center justify-between border-b-2 border-[#444] pr-[28px] pl-[32px] font-semibold">
        Pages
        <Plus />
      </div>
      <div className="flex h-[515px] shrink-0 flex-col gap-[16px] border-b-2 border-[#444] px-[16px] pt-[11px]">
        {pages.map((p, i) => (
          <div key={p} className={"flex h-[48px] shrink-0 items-center justify-between rounded-[10px] pr-[10px] pl-[16px] " + (i === 5 ? "bg-[#383838] font-[550]" : "tracking-[0px]")}>
            {p}
            {i === 4 && (
              <svg width="28" height="18" viewBox="0 0 28 18" fill="none" stroke="#6fcf84" strokeWidth="2">
                <path d="M8 2L1.500 9 8 16M20 2l6.500 7L20 16M16 1l-4 16" />
              </svg>
            )}
          </div>
        ))}
      </div>
      <div className="flex h-[80px] shrink-0 items-center justify-between pr-[26px] pl-[32px] font-semibold">
        Layers
        <svg width="26" height="22" viewBox="0 0 26 22" fill="none" stroke="#fff" strokeWidth="2">
          <path d="M0 2h13M0 8h13M0 14h13M0 20h13M16 2l4.500 4L25 2M16 20l4.500-4 4.500 4" />
        </svg>
      </div>
      {["Reglas de íconos", "GFlow"].map((l) => (
        <div key={l} className="flex h-[64px] shrink-0 items-center gap-[22px] pl-[38px] font-semibold">
          <SectionIcon />
          {l}
        </div>
      ))}
      {layers.map((l) => (
        <div key={l} className="flex h-[64px] shrink-0 items-center gap-[20px] pl-[84px] tracking-[0.14px] whitespace-nowrap text-[#d0a6ff] [font-feature-settings:'cv08']">
          {l === "Snackbar" ? <VariantIcon /> : <ComponentIcon />}
          {l}
        </div>
      ))}
      <div className="flex h-[64px] shrink-0 items-center gap-[22px] pl-[86px] whitespace-nowrap">
        <svg width="20" height="20" viewBox="0 0 20 20" fill="none" stroke="#8c8c8c" strokeWidth="2">
          <rect x="1" y="1" width="18" height="18" rx="2" />
          <path d="M10 1v18" />
        </svg>
        Organismos Solicitudes
      </div>
    </div>
  );
}

/* ---------- rulers ---------- */

const hTicks = Array.from({ length: 19 }, (_, i) => 500 + i * 500);
const vTicks = Array.from({ length: 18 }, (_, i) => 2000 + i * 500);

function Rulers({ children }: { children: React.ReactNode }) {
  return (
    <div className="flex min-w-0 flex-1">
      <div className="flex w-[42px] shrink-0 flex-col border-r-2 border-[#444] bg-[#2c2c2c]">
        <div className="h-[42px] shrink-0 border-b-2 border-[#444]" />
        <div className="relative min-h-0 flex-1 overflow-hidden">
          {vTicks.map((v, i) => (
            <div key={v} className="absolute right-0 left-0 flex h-[80px] items-center justify-between" style={{ top: 16.500 + i * 104.280 - 40, opacity: i === 0 ? 0.4 : 1 }}>
              <span className="flex w-[30px] -rotate-90 items-center justify-center text-[20px] tracking-[0.3px] text-[#7d7d7d]">{v}</span>
              <span className="h-[2px] w-[8px] bg-[#7d7d7d]" />
            </div>
          ))}
        </div>
      </div>
      <div className="flex min-w-0 flex-1 flex-col">
        <div className="relative h-[42px] shrink-0 overflow-hidden border-b-2 border-[#444] bg-[#2c2c2c]">
          {hTicks.map((v, i) => (
            <div key={v} className="absolute top-0 bottom-0 flex w-[80px] flex-col items-center justify-between pt-[3px]" style={{ left: 65 + i * 104.280 - 40 }}>
              <span className="text-[20px] leading-[24px] text-[#7d7d7d]">{v}</span>
              <span className="h-[8px] w-[2px] bg-[#7d7d7d]" />
            </div>
          ))}
        </div>
        {children}
      </div>
    </div>
  );
}

/* ---------- right sidebar ---------- */

const treeA = ["Primary", "Secondary", "Helpers", "Dark"];
const swatches: [string, string][] = [["100", "bg-[#960f16]"], ["80", "bg-[#ab3f45]"], ["60", "bg-[#c06f73]"], ["40", "bg-[#d59fa2]"], ["20", "bg-[#eacfd0]"], ["5", "bg-[#faf3f4]"]];

function Group({ label, open, nested }: { label: string; open?: boolean; nested?: boolean }) {
  return (
    <div className={"flex h-[60px] shrink-0 items-center tracking-[0px] " + (nested ? "pl-[88px]" : "pl-[42px]")}>
      <span className="flex w-[40px] pl-[2px]">{open ? <Chevron color="#8c8c8c" /> : <span className="pl-[2px]"><ChevronRight /></span>}</span>
      {label}
    </div>
  );
}

function RightSidebar() {
  return (
    <div className="flex w-[482px] shrink-0 flex-col overflow-hidden border-l-2 border-[#444] bg-[#2c2c2c] text-[22px] tracking-[0.1px] text-white">
      <div className="flex h-[162px] shrink-0 flex-col border-b-2 border-[#444] pt-[16px]">
        <div className="flex h-[64px] items-center pr-[16px] pl-[24px]">
          <div className="flex size-[48px] items-center justify-center rounded-full bg-[#9747ff]">R</div>
          <div className="flex-1 pl-[10px]"><Chevron /></div>
          <svg width="28" height="32" viewBox="0 0 28 32" fill="none" stroke="#fff" strokeWidth="2" strokeLinejoin="round" className="mr-[27px]">
            <path d="M3 4.500v23a1.500 1.500 0 0 0 2.300 1.200l20-11.500a1.400 1.400 0 0 0 0-2.400l-20-11.500A1.500 1.500 0 0 0 3 4.500z" />
          </svg>
          <Chevron />
          <div className="ml-[18px] flex h-[64px] w-[109px] items-center justify-center rounded-[10px] bg-[#0c8ce9] font-medium">Share</div>
        </div>
        <div className="mt-[16px] flex h-[48px] items-center pl-[16px]">
          <div className="flex h-[48px] w-[106px] items-center justify-center rounded-[10px] bg-[#383838] font-[550]">Design</div>
          <span className="w-[241px] pl-[25px] tracking-[0.2px] text-[#b5b5b5]">Prototype</span>
          <span className="w-[75px]">10%</span>
          <Chevron />
        </div>
      </div>
      <div className="flex h-[100px] shrink-0 items-start border-b-2 border-[#444] pt-[18px] pl-[32px]">
        <div className="flex h-[48px] w-[368px] items-center rounded-[10px] bg-[#383838]">
          <div className="ml-[10px] size-[28px] rounded-[4px] border-2 border-[#333] bg-[#1e1e1e]" />
          <span className="w-[220px] pl-[12px]">1E1E1E</span>
          <span className="h-[48px] w-[2px] bg-[#2c2c2c]" />
          <span className="w-[77px] pl-[16px]">100</span>
          <span className="text-[20px] text-[#a0a0a0]">%</span>
        </div>
        <svg width="28" height="48" viewBox="0 0 28 48" fill="none" stroke="#fff" strokeWidth="2" className="ml-[26px]">
          <path d="M1 24c3-6 7.500-9 13-9s10 3 13 9c-3 6-7.500 9-13 9s-10-3-13-9z" />
          <circle cx="14" cy="24" r="3.500" />
        </svg>
      </div>
      <div className="flex h-[82px] shrink-0 items-center justify-between border-b-2 border-[#444] pr-[28px] pl-[32px] font-semibold">
        Variables
        <svg width="24" height="24" viewBox="0 0 24 24" fill="none" stroke="#fff" strokeWidth="2">
          <circle cx="5" cy="15" r="4" />
          <circle cx="19" cy="9" r="4" />
          <path d="M5 0v11M5 19v5M19 0v5M19 13v11" />
        </svg>
      </div>
      <div className="flex h-[80px] shrink-0 items-center justify-between pr-[28px] pl-[32px] font-semibold">
        Styles
        <Plus />
      </div>
      <div className="flex h-[64px] shrink-0 items-center pl-[32px] text-[#b5b5b5]">Text styles</div>
      <div className="h-[4px] shrink-0" />
      <Group label="Mobile" />
      <div className="h-[28px] shrink-0" />
      <div className="flex h-[64px] shrink-0 items-center pl-[32px] text-[#b5b5b5]">Color styles</div>
      <div className="h-[4px] shrink-0" />
      {treeA.map((l) => <Group key={l} label={l} />)}
      <Group label="Feedback" open />
      <Group label="Success" nested />
      <Group label="Update" nested />
      <Group label="Alert" nested open />
      {swatches.map(([l, cls]) => (
        <div key={l} className="flex h-[60px] shrink-0 items-center gap-[16px] pl-[126px]">
          <span className={"size-[32px] rounded-full " + cls} />
          {l}
        </div>
      ))}
      {["Pending", "Renew", "In Progress", "Active"].map((l) => <Group key={l} label={l} nested />)}
      <div className="h-[28px] shrink-0" />
      <div className="flex h-[64px] shrink-0 items-center pl-[32px] text-[#b5b5b5]">Effect styles</div>
    </div>
  );
}

/* ---------- floating toolbar ---------- */

function Tool({ children, active, gap }: { children: React.ReactNode; active?: boolean; gap?: boolean }) {
  return <div className={"flex size-[64px] shrink-0 items-center justify-center rounded-[10px] " + (active ? "bg-[#0c8ce9] " : "") + (gap ? "ml-[16px]" : "")}>{children}</div>;
}
const Drop = () => <div className="ml-[2px] flex w-[32px] shrink-0 justify-center"><Chevron color="#e6e6e6" /></div>;

function Toolbar() {
  return (
    <div className="absolute top-[1770px] left-[1030px] flex h-[96px] w-[964px] items-center rounded-[26px] border-2 border-[#3c3c3c] bg-[#2c2c2c] pl-[14px] shadow-[0_4px_14px_rgba(0,0,0,0.45)]">
      <Tool active>
        <svg width="40" height="40" viewBox="0 0 40 40" fill="none" stroke="#fff" strokeWidth="2.200" strokeLinejoin="round">
          <path d="M3.500 5.200l11 28.600c.6 1.600 2.800 1.500 3.300-.1l3.200-9.800c.3-.9 1-1.600 1.900-1.900l12-4.300c1.600-.6 1.600-2.800 0-3.400L6 3c-1.500-.6-3 .800-2.500 2.200z" />
        </svg>
      </Tool>
      <Drop />
      <Tool gap>
        <svg width="32" height="32" viewBox="0 0 32 32" stroke="#fff" strokeWidth="2"><path d="M7.500 0v32M24.500 0v32M0 7.500h32M0 24.500h32" /></svg>
      </Tool>
      <Drop />
      <Tool gap>
        <svg width="32" height="32" viewBox="0 0 32 32" fill="none" stroke="#fff" strokeWidth="2"><rect x="1" y="1" width="30" height="30" rx="3" /></svg>
      </Tool>
      <Drop />
      <Tool gap>
        <svg width="36" height="36" viewBox="0 0 36 36" fill="none" stroke="#fff" strokeWidth="2" strokeLinejoin="round">
          <path d="M1 4c0-1.500 1.500-2.800 3-2.500C12 2.500 20 3.500 25 6.500c4 2.500 6 7.500 6.500 14 0 1 .7 1.500 1.500 2 1 .5 1.500 1.200.8 2l-9 9.700c-.8.8-1.600.3-2-.700-.4-.9-.9-1.600-2-1.800C14 31 9 29 6 24.500 3 19.500 2 12 1 4zM2 2.500l12.500 12.500" />
          <circle cx="18" cy="18.500" r="4.800" />
        </svg>
      </Tool>
      <Drop />
      <Tool gap>
        <svg width="32" height="32" viewBox="0 0 32 32" fill="none" stroke="#fff" strokeWidth="2"><path d="M1 8V2h30v6M16 2v29M10 31h13" /></svg>
      </Tool>
      <Tool gap>
        <svg width="32" height="32" viewBox="0 0 32 32" fill="none" stroke="#fff" strokeWidth="2" strokeLinejoin="round"><path d="M1 16a15 15 0 1 1 15 15H4a3 3 0 0 1-3-3z" /></svg>
      </Tool>
      <Drop />
      <div className="ml-[14px] flex w-[64px] shrink-0 justify-center">
        <svg width="36" height="38" viewBox="0 0 36 38" fill="none" stroke="#fff" strokeWidth="2" strokeLinejoin="round">
          <path d="M17 4c-2 0-2.600 1.700-3 4.500-.6 4-1.200 6.500-5.500 7.300C4.500 16.500 2 17 2 19.200s2.500 2.600 6.500 3.300c4.300.8 4.900 3.500 5.500 7.500.4 2.800 1 4.500 3 4.500s2.600-1.700 3-4.500c.6-4 1.200-6.700 5.500-7.500 4-.7 6.500-1.100 6.500-3.300s-2.500-2.700-6.500-3.400C21.200 15 20.600 12.500 20 8.500 19.600 5.700 19 4 17 4z" />
          <circle cx="31" cy="6" r="4.200" />
          <path d="M31 27v9.500M26.300 31.800h9.500" />
        </svg>
      </div>
      <div className="ml-[18px] h-[92px] w-[2px] shrink-0 bg-[#444]" />
      <div className="ml-[16px] flex h-[64px] w-[184px] shrink-0 items-center rounded-[10px] bg-[#444]">
        <div className="flex w-[64px] justify-center pr-[2px]">
          <svg width="28" height="28" viewBox="0 0 28 28" fill="none" stroke="#c0c0c0" strokeWidth="2" strokeLinecap="round" strokeLinejoin="round">
            <path d="M1.500 14C6 9 11 4.500 16 2.200c3-1.300 5.500 0 4 2.600C17 9.500 11 14 8 18.500c-2 3.500 0 5.500 3 3.700C15 19.500 18 15.500 21.500 13c2.500-1.700 4.500 0 3.300 2.500-1.500 3-5 5.500-5.800 8.500-.5 2.500 1.500 3.500 3.500 2.700 1.500-.6 2.500-1.500 3-3" />
          </svg>
        </div>
        <div className="flex h-[56px] w-[56px] items-center justify-center rounded-[8px] border border-[#3a3a3a] bg-[#2c2c2c] shadow-[0_1px_4px_rgba(0,0,0,0.4)]">
          <svg width="28" height="28" viewBox="0 0 28 28" fill="none" stroke="#7cc4f8" strokeWidth="2" strokeLinejoin="round">
            <path d="M4 2h19a2 2 0 0 1 2 2v3a2 2 0 0 1-2 2H9v14a2 2 0 0 1-2 2H4a2 2 0 0 1-2-2V4a2 2 0 0 1 2-2zM9 2v7M14.500 6v2.500M19.500 6v2.500M2 9h7M6 14.500h2.500M6 19.500h2.500" />
            <path d="M14.300 15.600l3.600 10c.3.900 1.500.9 1.800 0l1.400-3.800 4.500-2.300c.8-.4.700-1.500-.1-1.800l-9.700-3.400c-.9-.300-1.800.5-1.500 1.300z" />
          </svg>
        </div>
        <div className="flex flex-1 justify-center">
          <svg width="28" height="26" viewBox="0 0 28 26" fill="none" stroke="#c0c0c0" strokeWidth="2"><path d="M7.500 6L1.500 13l6 7M20.500 6l6 7-6 7M17 1.500l-6 23" /></svg>
        </div>
      </div>
    </div>
  );
}

export default function App() {
  return (
    <div className="relative flex h-[1890px] w-[3024px] flex-col overflow-hidden bg-[#1e1e1e] font-['Inter','Noto_Sans',sans-serif]">
      <TabBar />
      <div className="flex min-h-0 flex-1">
        <LeftSidebar />
        <Rulers>
          <Canvas />
        </Rulers>
        <RightSidebar />
      </div>
      <Toolbar />
      <div className="absolute top-[1778px] left-[2912px] flex size-[64px] items-center justify-center rounded-full bg-[#1e1e1e] text-[33px] font-light text-white">?</div>
    </div>
  );
}
